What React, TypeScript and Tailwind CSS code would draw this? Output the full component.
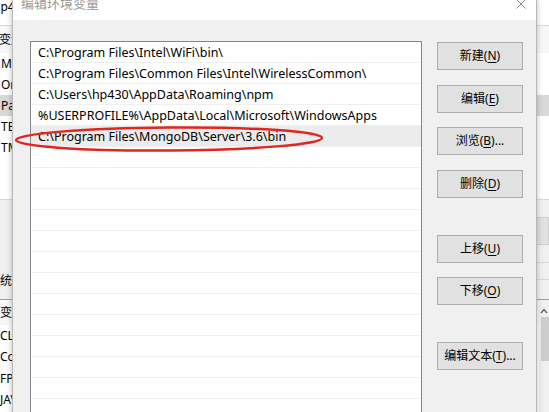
import React from 'react'

const paths = [
  'C:\\Program Files\\Intel\\WiFi\\bin\\',
  'C:\\Program Files\\Common Files\\Intel\\WirelessCommon\\',
  'C:\\Users\\hp430\\AppData\\Roaming\\npm',
  '%USERPROFILE%\\AppData\\Local\\Microsoft\\WindowsApps',
  'C:\\Program Files\\MongoDB\\Server\\3.6\\bin',
]

const buttons = [
  { label: '新建', key: 'N', tail: '', gap: 'mt-0' },
  { label: '编辑', key: 'E', tail: '', gap: 'mt-[15px]' },
  { label: '浏览', key: 'B', tail: '...', gap: 'mt-[14px]' },
  { label: '删除', key: 'D', tail: '', gap: 'mt-[15px]' },
  { label: '上移', key: 'U', tail: '', gap: 'mt-[37px]' },
  { label: '下移', key: 'O', tail: '', gap: 'mt-[14px]' },
  { label: '编辑文本', key: 'T', tail: '...', gap: 'mt-[37px]' },
]

const userVars = ['MOZ_PLUGIN_PATH', 'OneDrive', 'Path', 'TEMP', 'TMP']
const sysVars = ['CLASSPATH', 'ComSpec', 'FP_NO_HOST_CHECK', 'JAVA_HOME']

const font = { fontFamily: '"Noto Sans", "Noto Sans CJK SC", sans-serif' }

// only the first 12px of the back window peek out left of the dialog
function Peek({ children, shift = '' }: { children: React.ReactNode; shift?: string }) {
  return (
    <div className="w-[12px] overflow-hidden whitespace-nowrap">
      <span className={`inline-block ${shift}`}>{children}</span>
    </div>
  )
}

// window behind the dialog, only thin strips of it show at both sides
function BackWindow() {
  return (
    <div className="absolute inset-0 bg-[#f0f0f0] flex flex-col text-[12px] text-black">
      <div className="h-[25px] bg-white flex items-start">
        <div className="mt-[-1px] leading-[16px]">
          <Peek shift="ml-[-7px]">hp430 的用户变量(U)</Peek>
        </div>
      </div>
      <div className="h-[175px] bg-white border-t border-b border-[#d9d9d9] flex flex-col">
        <div className="h-[27px] flex items-center bg-[#f7f7f7]">
          <Peek shift="ml-[-1px]">变量</Peek>
        </div>
        {userVars.map((v, i) => (
          <div key={v} className={`h-[21px] flex items-center pl-[1px] ${i === 2 ? 'bg-[#d9d9d9]' : ''}`}>
            <Peek>{v}</Peek>
          </div>
        ))}
      </div>
      <div className="h-[99px] flex">
        <div className="flex-1 flex flex-col justify-end pb-[8px] leading-[20px]">
          <Peek shift="ml-[-12px]">系统变量(S)</Peek>
        </div>
        <div className="w-[20px] flex flex-col">
          <div className="mt-[17px] h-[28px] bg-[#e1e1e1] border border-[#cfcfcf]"></div>
          <div className="mt-[17px] h-[18px] border-t border-b border-[#d9d9d9]"></div>
        </div>
      </div>
      <div className="flex-1 bg-white border-t border-[#a0a0a0] flex">
        <div className="flex-1 flex flex-col">
          <div className="h-[25px] flex items-center bg-[#f7f7f7]">
            <Peek>变量</Peek>
          </div>
          {sysVars.map((v) => (
            <div key={v} className="h-[21.5px] flex items-center">
              <Peek>{v}</Peek>
            </div>
          ))}
        </div>
        <div className="w-[10px] bg-[#f0f0f0] flex flex-col items-center">
          <svg width="8" height="6" viewBox="0 0 8 6" className="mt-[8px]">
            <path d="M1 5 L4 1.5 L7 5" stroke="#606060" strokeWidth="1.3" fill="none" />
          </svg>
          <div className="w-[8px] h-[44px] bg-[#cdcdcd] mt-[3px] ml-[2px]"></div>
        </div>
      </div>
    </div>
  )
}

function Dialog() {
  return (
    <div className="absolute left-[12px] top-0 w-[525px] h-[440px] flex flex-col border-l border-r border-[#b9b9b9] shadow-[0_0_6px_rgba(0,0,0,0.25)]" style={font}>
      <div className="h-[20px] bg-white flex items-start justify-between shrink-0">
        <span className="ml-[8px] mt-[-6px] text-[13px] leading-[18px] text-[#9a9a9a]">编辑环境变量</span>
        <svg width="10" height="10" viewBox="0 0 10 10" className="mr-[10px] mt-[-1px]">
          <path d="M0.5 0.5 L9.5 9.5 M9.5 0.5 L0.5 9.5" stroke="#8a8a8a" strokeWidth="1" />
        </svg>
      </div>
      <div className="flex-1 bg-[#f0f0f0] flex pl-[17px] pt-[21px]">
        <div className="w-[392px] border border-[#828790] bg-white flex flex-col">
          {paths.map((p, i) => (
            <div
              key={p}
              className={`h-[21px] shrink-0 border-b border-[#f0f0f0] flex items-center pl-[7px] pt-[2px] text-[12.5px] text-black whitespace-nowrap ${i === 4 ? 'bg-[#ececec]' : ''}`}
            >
              {p}
            </div>
          ))}
          {Array.from({ length: 14 }).map((_, i) => (
            <div key={i} className="h-[21px] shrink-0 border-b border-[#f0f0f0]"></div>
          ))}
        </div>
        <div className="ml-[15px] w-[86px] flex flex-col pt-[1px]">
          {buttons.map((b) => (
            <button
              key={b.key}
              className={`${b.gap} h-[28px] bg-[#e1e1e1] border border-[#adadad] text-[12px] text-black flex items-center justify-center`}
            >
              {b.label}(<span className="underline underline-offset-2">{b.key}</span>){b.tail}
            </button>
          ))}
        </div>
      </div>
    </div>
  )
}

export default function App() {
  return (
    <div className="relative w-[549px] h-[412px] overflow-hidden bg-white" style={font}>
      <BackWindow />
      <Dialog />
      <svg className="absolute left-0 top-0 pointer-events-none" width="549" height="412">
        <ellipse cx="169" cy="139" rx="153" ry="11.5" fill="none" stroke="#e0261f" strokeWidth="2.5" transform="rotate(-0.4 169 139)" />
      </svg>
    </div>
  )
}
